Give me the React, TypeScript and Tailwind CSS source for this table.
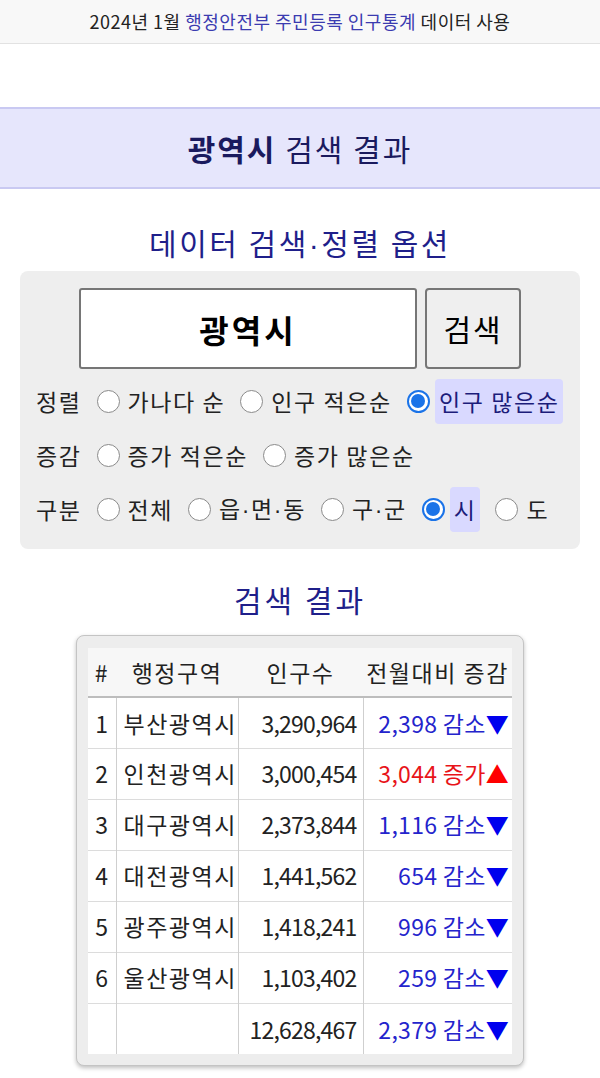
import React from 'react';

const FONT = { fontFamily: '"Noto Sans CJK KR", "Noto Sans", sans-serif' };

interface Option {
    label: string;
    checked?: boolean;
}

interface Row {
    no: string;
    name: string;
    pop: string;
    diff: string;
    up?: boolean;
}

const rows: Row[] = [
    { no: '1', name: '부산광역시', pop: '3,290,964', diff: '2,398 감소' },
    { no: '2', name: '인천광역시', pop: '3,000,454', diff: '3,044 증가', up: true },
    { no: '3', name: '대구광역시', pop: '2,373,844', diff: '1,116 감소' },
    { no: '4', name: '대전광역시', pop: '1,441,562', diff: '654 감소' },
    { no: '5', name: '광주광역시', pop: '1,418,241', diff: '996 감소' },
    { no: '6', name: '울산광역시', pop: '1,103,402', diff: '259 감소' },
    { no: '', name: '', pop: '12,628,467', diff: '2,379 감소' },
];

// 가운뎃점은 CJK 폰트에서 전각으로 나와서 라틴 폰트로 좁게
function Dot() {
    return <span style={{ fontFamily: '"Liberation Sans", sans-serif' }}>·</span>;
}

function withDots(text: string) {
    const parts = text.split('·');
    return parts.map((p, i) => (
        <React.Fragment key={i}>
            {p}
            {i < parts.length - 1 && <Dot />}
        </React.Fragment>
    ));
}

function Radio({ checked }: { checked?: boolean }) {
    if (checked) {
        return (
            <span className="inline-flex w-[23px] h-[23px] rounded-full border-2 border-[#1a73e8] bg-white items-center justify-center shrink-0">
                <span className="w-[14px] h-[14px] rounded-full bg-[#1a73e8]" />
            </span>
        );
    }
    return <span className="inline-block w-[23px] h-[23px] rounded-full border border-[#8a8a8a] bg-white shrink-0" />;
}

function OptionRow({ title, options }: { title: string; options: Option[] }) {
    return (
        <div className="flex items-center h-[54px] text-[23px] tracking-[1.6px] text-[#222]">
            <span className="mr-[15px]">{title}</span>
            {options.map((o) => (
                <span key={o.label} className="flex items-center mr-[15px]">
                    <Radio checked={o.checked} />
                    {o.checked ? (
                        <span className="ml-[5px] px-[4px] h-[45px] flex items-center bg-[#d9d9ff] rounded-[4px] text-[#1c1c7a]">
                            {withDots(o.label)}
                        </span>
                    ) : (
                        <span className="ml-[8px]">{withDots(o.label)}</span>
                    )}
                </span>
            ))}
        </div>
    );
}

export default function App() {
    return (
        <div className="w-[600px] min-h-[1078px] bg-white" style={FONT}>
            {/* 상단 출처 */}
            <div className="h-[44px] bg-[#f8f8f8] border-b border-[#e2e2e2] flex items-center justify-center text-[18px] tracking-[0.5px] text-[#222]">
                2024년 1월&nbsp;<span className="text-[#3b3bb0]">행정안전부 주민등록 인구통계</span>&nbsp;데이터 사용
            </div>

            {/* 제목 */}
            <div className="mt-[63px] h-[82px] bg-[#e6e6fc] border-y-2 border-[#c9c9f2] flex items-center justify-center text-[30px] tracking-[2px] text-[#1a1a5e]">
                <b>광역시</b>&nbsp;검색 결과
            </div>

            <h2 className="mt-[33px] text-center text-[30px] leading-[40px] tracking-[2.5px] text-[#1f1f8a]">
                데이터 검색<Dot />정렬 옵션
            </h2>

            {/* 검색 옵션 */}
            <div className="mx-[20px] mt-[6px] bg-[#eeeeee] rounded-[8px] pl-[16px] pt-[17px] pb-[13px]">
                <div className="flex justify-center gap-[8px] pr-[16px]">
                    <div className="w-[338px] h-[81px] bg-white border-2 border-[#767676] rounded-[3px] flex items-center justify-center text-[32px] tracking-[3px] font-bold text-black">
                        광역시
                    </div>
                    <div className="w-[96px] h-[81px] bg-[#efefef] border-2 border-[#767676] rounded-[4px] flex items-center justify-center text-[30px] tracking-[2px] text-black">
                        검색
                    </div>
                </div>
                <div className="mt-[5px]">
                    <OptionRow
                        title="정렬"
                        options={[{ label: '가나다 순' }, { label: '인구 적은순' }, { label: '인구 많은순', checked: true }]}
                    />
                    <OptionRow title="증감" options={[{ label: '증가 적은순' }, { label: '증가 많은순' }]} />
                    <OptionRow
                        title="구분"
                        options={[
                            { label: '전체' },
                            { label: '읍·면·동' },
                            { label: '구·군' },
                            { label: '시', checked: true },
                            { label: '도' },
                        ]}
                    />
                </div>
            </div>

            <h2 className="mt-[30px] text-center text-[30px] leading-[40px] tracking-[3px] text-[#1f1f8a]">검색 결과</h2>

            {/* 결과 표 */}
            <div className="mx-auto mt-[16px] w-[448px] bg-[#ededed] border border-[#c4c4c4] rounded-[8px] shadow-[0_2px_4px_rgba(0,0,0,0.25)] px-[11px] pt-[12px] pb-[11px]">
                <table className="w-full border-collapse text-[23px] text-[#222]">
                    <thead>
                        <tr className="h-[49px] bg-[#f7f7f7] border-b-2 border-[#bdbdbd] tracking-[1.5px]">
                            <th className="w-[28px] font-normal">#</th>
                            <th className="w-[122px] font-normal">행정구역</th>
                            <th className="w-[125px] font-normal">인구수</th>
                            <th className="font-normal">전월대비 증감</th>
                        </tr>
                    </thead>
                    <tbody>
                        {rows.map((r, i) => (
                            <tr key={i} className="h-[51px] bg-white border-b border-[#dcdcdc] last:border-b-0">
                                <td className="text-center border-r border-[#cfcfcf]">{r.no}</td>
                                <td className="pl-[7px] tracking-[1.5px] border-r border-[#cfcfcf]">{r.name}</td>
                                <td className="text-right pr-[6px] tracking-[-0.8px] border-r border-[#cfcfcf]">{r.pop}</td>
                                <td className={`text-right pr-[3px] tracking-[0.3px] ${r.up ? 'text-[#e8141a]' : 'text-[#2424cc]'}`}>
                                    {r.diff}
                                    <span className={r.up ? 'text-[#ff0000]' : 'text-[#0000ee]'}>{r.up ? '▲' : '▼'}</span>
                                </td>
                            </tr>
                        ))}
                    </tbody>
                </table>
            </div>
        </div>
    );
}
